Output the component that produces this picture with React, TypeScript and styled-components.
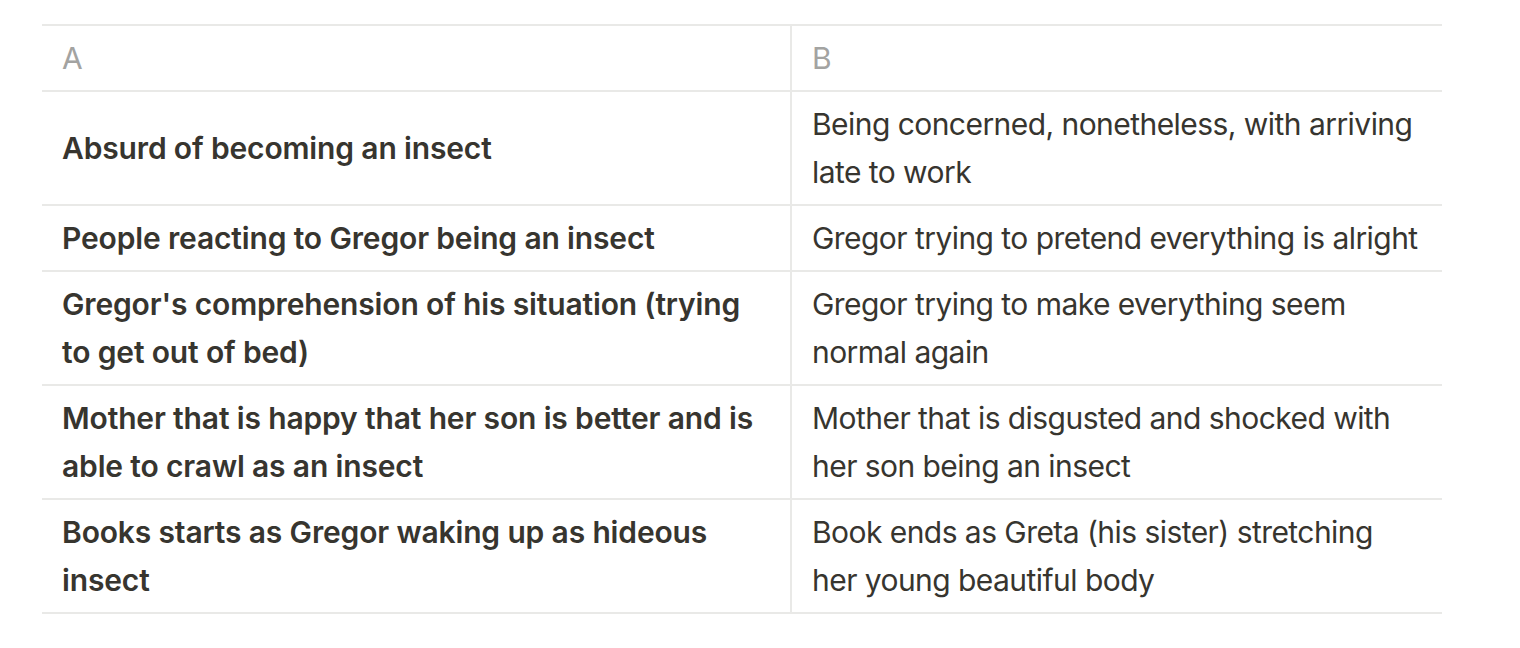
import React from "react";
import styled, { createGlobalStyle } from "styled-components";

const GlobalStyle = createGlobalStyle`
  html, body { margin: 0; padding: 0; background: #ffffff; }
  body { font-family: Inter, "Noto Sans", sans-serif; }
`;

const Page = styled.div`
  padding: 24px 0 0 42px;
`;

const Table = styled.table`
  width: 1400px;
  border-collapse: collapse;
  table-layout: fixed;
  font-family: Inter, "Noto Sans", sans-serif;
  font-size: 30px;
  line-height: 48px;
  color: #37352f;
`;

const Row = styled.tr`
  border-top: 2px solid #e9e9e7;
  border-bottom: 2px solid #e9e9e7;
`;

const Cell = styled.td<{ $bold?: boolean; $head?: boolean }>`
  padding: 8px 20px;
  vertical-align: middle;
  font-weight: ${(p) => (p.$bold ? 600 : 400)};
  letter-spacing: ${(p) => (p.$bold ? "-0.15px" : "-0.55px")};
  color: ${(p) => (p.$head ? "#a3a3a1" : "#37352f")};
  & + & {
    border-left: 2px solid #e9e9e7;
  }
`;

const rows: [string, string][] = [
  ["Absurd of becoming an insect", "Being concerned, nonetheless, with arriving late to work"],
  ["People reacting to Gregor being an insect", "Gregor trying to pretend everything is alright"],
  ["Gregor's comprehension of his situation (trying to get out of bed)", "Gregor trying to make everything seem normal again"],
  ["Mother that is happy that her son is better and is able to crawl as an insect", "Mother that is disgusted and shocked with her son being an insect"],
  ["Books starts as Gregor waking up as hideous insect", "Book ends as Greta (his sister) stretching her young beautiful body"],
];

export default function App() {
  return (
    <>
      <GlobalStyle />
      <Page>
        <Table>
          <colgroup>
            <col style={{ width: 749 }} />
            <col style={{ width: 651 }} />
          </colgroup>
          <tbody>
            <Row>
              <Cell $head>A</Cell>
              <Cell $head>B</Cell>
            </Row>
            {rows.map(([a, b], i) => (
              <Row key={i}>
                <Cell $bold>{a}</Cell>
                <Cell>{b}</Cell>
              </Row>
            ))}
          </tbody>
        </Table>
      </Page>
    </>
  );
}
